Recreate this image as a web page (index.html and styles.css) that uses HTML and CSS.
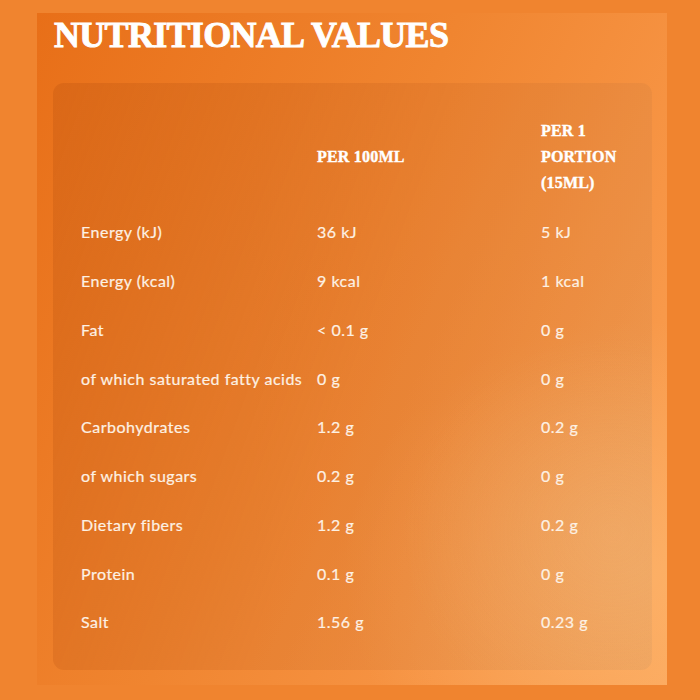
FILE: index.html
```html
<!DOCTYPE html>
<html>
<head>
<meta charset="utf-8">
<link rel="stylesheet" href="styles.css">
</head>
<body>
<section class="panel">
  <h1 class="title">NUTRITIONAL VALUES</h1>
  <div class="card">
    <div class="table">
      <div class="row head">
        <div class="cell"></div>
        <div class="cell">PER 100ML</div>
        <div class="cell">PER 1<br>PORTION<br>(15ML)</div>
      </div>
      <div class="row"><div class="cell">Energy (kJ)</div><div class="cell">36 kJ</div><div class="cell">5 kJ</div></div>
      <div class="row"><div class="cell">Energy (kcal)</div><div class="cell">9 kcal</div><div class="cell">1 kcal</div></div>
      <div class="row"><div class="cell">Fat</div><div class="cell">&lt; 0.1 g</div><div class="cell">0 g</div></div>
      <div class="row"><div class="cell">of which saturated fatty acids</div><div class="cell">0 g</div><div class="cell">0 g</div></div>
      <div class="row"><div class="cell">Carbohydrates</div><div class="cell">1.2 g</div><div class="cell">0.2 g</div></div>
      <div class="row"><div class="cell">of which sugars</div><div class="cell">0.2 g</div><div class="cell">0 g</div></div>
      <div class="row"><div class="cell">Dietary fibers</div><div class="cell">1.2 g</div><div class="cell">0.2 g</div></div>
      <div class="row"><div class="cell">Protein</div><div class="cell">0.1 g</div><div class="cell">0 g</div></div>
      <div class="row"><div class="cell">Salt</div><div class="cell">1.56 g</div><div class="cell">0.23 g</div></div>
    </div>
  </div>
</section>
</body>
</html>
```
FILE: styles.css
```css
html, body {
  margin: 0;
  padding: 0;
}
body {
  width: 700px;
  height: 700px;
  background: #f0842f;
  overflow: hidden;
  font-family: "Lato", "Noto Sans", sans-serif;
  color: #fdf1e4;
}
.panel {
  margin: 13px 0 0 37px;
  width: 630px;
  height: 672px;
  box-sizing: border-box;
  padding: 0 15px 0 16px;
  background:
    radial-gradient(ellipse 420px 360px at 600px 560px, rgba(255, 190, 120, 0.5), rgba(255, 190, 120, 0) 70%),
    linear-gradient(115deg, #e86f18 0%, #f08530 45%, #f79545 75%, #fba559 100%);
}
.title {
  margin: 0;
  padding: 0 0 0 1px;
  height: 70px;
  font-family: "Liberation Serif", "Times New Roman", serif;
  font-weight: bold;
  font-size: 36px;
  line-height: 44px;
  letter-spacing: -0.7px;
  word-spacing: 1px;
  color: #ffffff;
  -webkit-text-stroke: 0.9px #ffffff;
}
.card {
  width: 599px;
  height: 587px;
  box-sizing: border-box;
  border-radius: 11px;
  padding: 23.5px 0 0 28px;
  background:
    radial-gradient(ellipse 300px 280px at 560px 450px, rgba(240, 180, 120, 0.3), rgba(240, 180, 120, 0) 70%),
    linear-gradient(110deg, rgba(205, 95, 20, 0.5) 0%, rgba(210, 110, 40, 0.3) 50%, rgba(215, 150, 90, 0.3) 100%);
}
.table {
  display: flex;
  flex-direction: column;
}
.row {
  display: grid;
  grid-template-columns: 236px 224px 1fr;
  height: 48.75px;
  align-items: center;
  font-size: 16px;
  letter-spacing: 0.5px;
  -webkit-text-stroke: 0.2px #fdf1e4;
}
.row.head {
  height: 101px;
  font-family: "Liberation Serif", "Times New Roman", serif;
  font-weight: bold;
  font-size: 16px;
  line-height: 26px;
  letter-spacing: 0.2px;
  color: #ffffff;
  -webkit-text-stroke: 0.4px #ffffff;
}
```
